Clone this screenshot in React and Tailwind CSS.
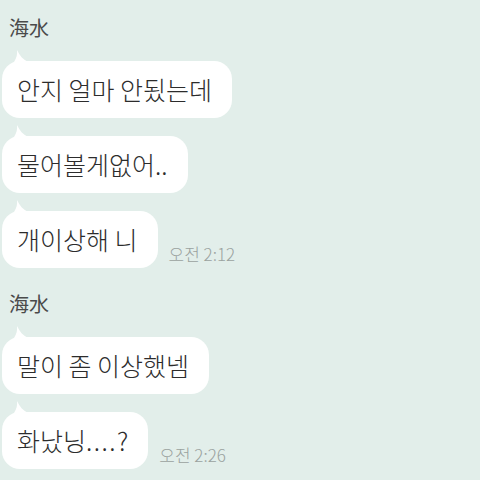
import React from 'react';

const Tail = () => (
  <svg className="absolute left-[11px] top-[-11px]" width="16" height="12" viewBox="0 0 16 12">
    <path d="M1 12 C3.5 8 4.5 4.5 4 0 C6.5 5.5 10 9.5 15 12 Z" fill="#ffffff" />
  </svg>
);

const Bubble = ({ children, time }) => (
  <div className="flex items-end">
    <div className="relative ml-[2px] flex h-[57px] items-center rounded-[18px] bg-white pl-[15px] pr-[20px] text-[25px] font-light text-[#2c2c2c]">
      <Tail />
      <span className="whitespace-nowrap">{children}</span>
    </div>
    {time && (
      <span className="mb-[5px] ml-[11px] text-[17px] font-light leading-[18px] text-[#9aa29f]">{time}</span>
    )}
  </div>
);

const Name = ({ className }) => (
  <div className={`ml-[9px] text-[20px] leading-[20px] text-[#4a4a4a] ${className}`}>海水</div>
);

export default function App() {
  return (
    <div
      className="flex h-[480px] w-[480px] flex-col overflow-hidden bg-[#e2eeea]"
      style={{ fontFamily: '"Noto Sans CJK KR", "Noto Sans", sans-serif' }}
    >
      <Name className="mt-[18px]" />
      <div className="mt-[23px] flex flex-col gap-[18px]">
        <Bubble>안지 얼마 안됬는데</Bubble>
        <Bubble>물어볼게없어..</Bubble>
        <Bubble time="오전 2:12">개이상해 니</Bubble>
      </div>
      <Name className="mt-[26px]" />
      <div className="mt-[23px] flex flex-col gap-[18px]">
        <Bubble>말이 좀 이상했넴</Bubble>
        <Bubble time="오전 2:26">
          화났닝<span className="tracking-[1.5px]">....</span>?
        </Bubble>
      </div>
    </div>
  );
}
